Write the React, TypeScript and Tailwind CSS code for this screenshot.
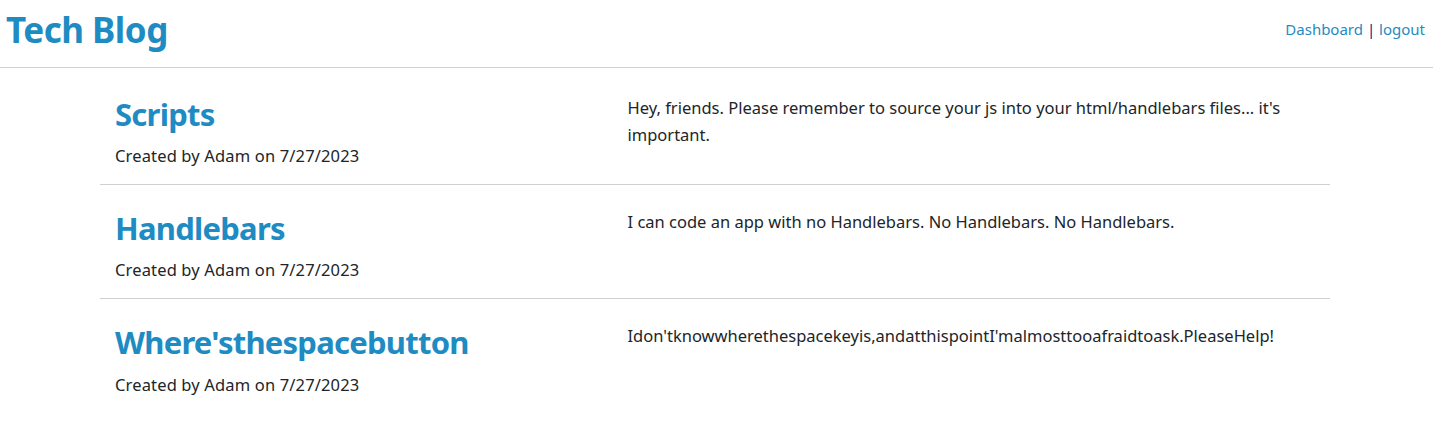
import React from "react";

const posts = [
  {
    title: "Scripts",
    body: "Hey, friends. Please remember to source your js into your html/handlebars files... it's important.",
  },
  {
    title: "Handlebars",
    body: "I can code an app with no Handlebars. No Handlebars. No Handlebars.",
  },
  {
    title: "Where'sthespacebutton",
    body: "Idon'tknowwherethespacekeyis,andatthispointI'malmosttooafraidtoask.PleaseHelp!",
  },
];

export default function App() {
  return (
    <div
      className="min-h-[447px] bg-white text-[#212529]"
      style={{ fontFamily: '"Noto Sans", "Open Sans", sans-serif' }}
    >
      <header className="flex h-[68px] items-center justify-between border-b border-[#d0d0d0] pb-[8px] pl-[6px] pr-[8px]">
        <h1 className="text-[35px] font-bold leading-none text-[#1e8bc3] tracking-[-0.5px]">Tech Blog</h1>
        <nav className="text-[15px] text-[#1e8bc3]">
          <a href="#">Dashboard</a>
          <span className="text-[#0a1a8c]"> | </span>
          <a href="#">logout</a>
        </nav>
      </header>
      <main className="ml-[100px] w-[1230px] pt-[3px]">
        {posts.map((p, i) => (
          <article
            key={p.title}
            className={`grid grid-cols-12 pt-[16px] pb-[15px] ${i < posts.length - 1 ? "border-b border-[#d0d0d0]" : ""}`}
          >
            <div className="col-span-5 px-[15px]">
              <h2 className="mt-[9px] text-[31px] font-bold leading-[1.2] text-[#1e8bc3] tracking-[-0.75px]">{p.title}</h2>
              <p className="mt-[9px] text-[16.5px] leading-[27px] tracking-[0.15px]">Created by Adam on 7/27/2023</p>
            </div>
            <div className="col-span-7 px-[15px]">
              <p className="pt-[7px] text-[16.5px] leading-[27px]">{p.body}</p>
            </div>
          </article>
        ))}
      </main>
    </div>
  );
}
